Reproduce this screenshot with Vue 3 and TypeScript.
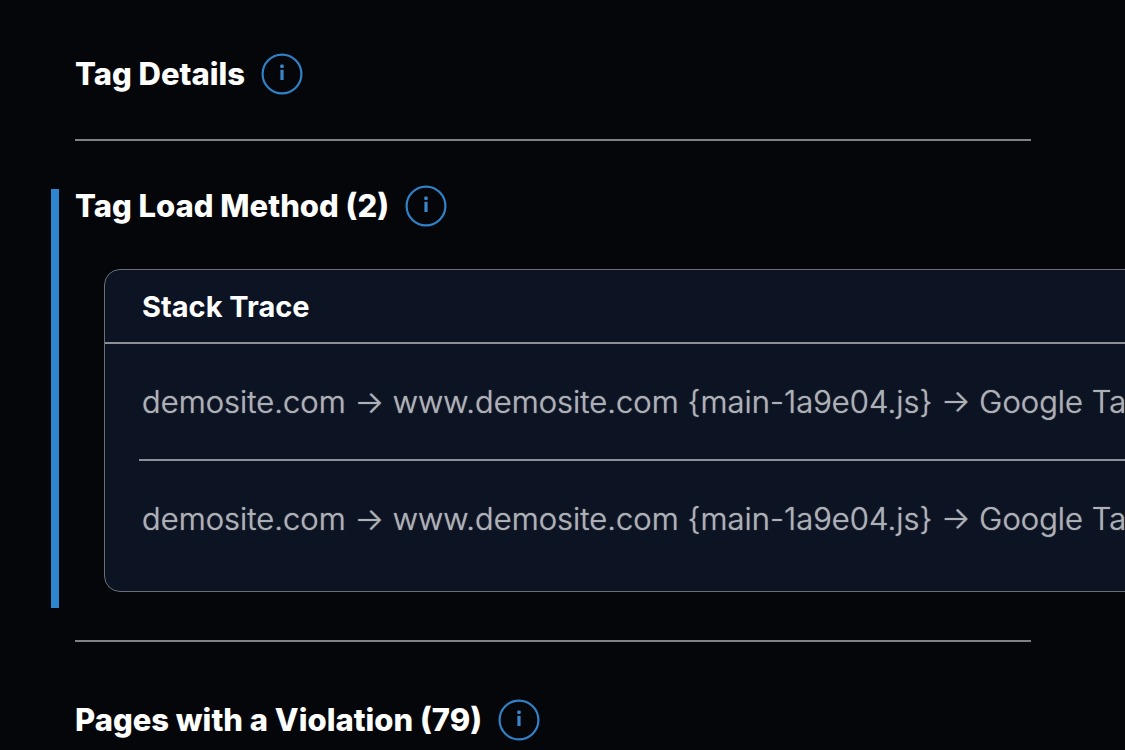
<script setup lang="ts">
import { ref } from 'vue'

interface Section {
  title: string
  kind: string
}

const sections: Section[] = [
  { title: 'Tag Details', kind: 'details' },
  { title: 'Tag Load Method (2)', kind: 'method' },
  { title: 'Pages with a Violation (79)', kind: 'pages' },
]

const traces = ref<string[]>([
  'demosite.com → www.demosite.com {main-1a9e04.js} → Google Tag',
  'demosite.com → www.demosite.com {main-1a9e04.js} → Google Tag',
])
</script>

<template>
  <main class="page">
    <section v-for="s in sections" :key="s.kind" class="section" :class="s.kind">
      <header class="heading">
        <h2>{{ s.title }}</h2>
        <button type="button" class="info" :aria-label="'About ' + s.title">
          <svg viewBox="0 0 42 42" aria-hidden="true">
            <circle cx="21" cy="21" r="19.4" />
            <rect x="19.4" y="16.8" width="3.2" height="10.2" />
            <rect x="19.2" y="11.6" width="3.6" height="3.4" rx="1.2" />
          </svg>
        </button>
      </header>
      <table v-if="s.kind === 'method'" class="trace">
        <thead>
          <tr><th scope="col">Stack Trace</th></tr>
        </thead>
        <tbody>
          <tr v-for="(t, i) in traces" :key="i">
            <td><div class="row">{{ t }}</div></td>
          </tr>
        </tbody>
      </table>
    </section>
  </main>
</template>

<style>
body {
  background: #050609;
}
</style>

<style scoped>
.page {
  box-sizing: border-box;
  height: 100vh;
  overflow: hidden;
  padding: 57px 0 0 51px;
  background: #050609;
  color: #fff;
  font-family: Inter, sans-serif;
}
.section {
  padding-left: 24px;
}
.heading {
  display: flex;
  align-items: center;
  gap: 16px;
  height: 34px;
}
h2 {
  margin: 0;
  font-size: 31px;
  line-height: 34px;
  font-weight: 800;
  white-space: nowrap;
}
.info {
  flex: none;
  width: 42px;
  height: 42px;
  padding: 0;
  border: 0;
  background: none;
  cursor: pointer;
}
.info svg {
  display: block;
}
.info circle {
  fill: none;
  stroke: #2f81c8;
  stroke-width: 2.2;
}
.info rect {
  fill: #3a86c8;
}
.details::after,
.pages::before {
  content: '';
  display: block;
  height: 2px;
  margin-right: 94px;
  background: #808184;
}
.details::after {
  margin-top: 48px;
}
.pages::before {
  margin-bottom: 61px;
}
.method {
  box-sizing: border-box;
  margin: 48px 0 32px;
  padding: 0 0 16px 16px;
  border-left: 8px solid #2f86d0;
}
.trace {
  margin: 46px 0 0 29px;
  width: 120%;
  background: #0c1323;
  border: 1px solid #6a6e77;
  border-radius: 16px;
  border-spacing: 0;
  white-space: nowrap;
}
th {
  height: 72px;
  padding: 0 37px;
  border-bottom: 2px solid #8a9093;
  text-align: left;
  font-size: 29px;
  font-weight: 700;
}
td {
  padding: 0 34px;
  color: #adb1b5;
  font-size: 31px;
  font-weight: 300;
  text-shadow: 0 0 1px #adb1b5;
}
.row {
  box-sizing: border-box;
  height: 117px;
  padding-left: 3px;
  line-height: 116px;
}
tbody tr:not(:last-child) .row {
  border-bottom: 2px solid #8b919c;
}
tbody tr:last-child .row {
  height: 130px;
}
</style>
